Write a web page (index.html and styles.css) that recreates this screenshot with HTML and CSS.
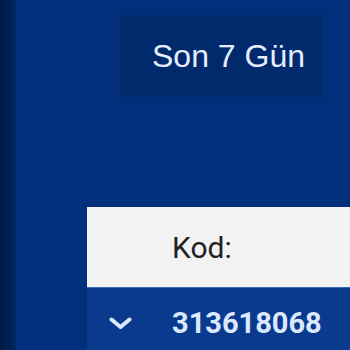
FILE: index.html
```html
<!DOCTYPE html>
<html lang="tr">
<head>
<meta charset="utf-8">
<link rel="stylesheet" href="styles.css">
</head>
<body>
<div class="page">
  <div class="strip"></div>
  <div class="main">
    <div class="filter">
      <div class="range">Son 7 Gün</div>
    </div>
    <div class="table">
      <div class="thead">
        <div class="cell-icon"></div>
        <div class="th">Kod:</div>
      </div>
      <div class="row">
        <div class="cell-icon">
          <svg class="chev" width="23" height="13" viewBox="0 0 23 13"><path d="M2.5 2.5 L11.5 10 L20.5 2.5" fill="none" stroke="#dce8ff" stroke-width="4" stroke-linecap="round" stroke-linejoin="round"/></svg>
        </div>
        <div class="td">313618068</div>
      </div>
    </div>
  </div>
</div>
</body>
</html>
```
FILE: styles.css
```css
html, body {
  margin: 0;
  padding: 0;
  width: 350px;
  height: 350px;
  overflow: hidden;
  background: #012f7b;
}
.page {
  display: flex;
  height: 350px;
}
.strip {
  width: 16px;
  flex: none;
  background: linear-gradient(to right, #001a44 0%, #001f52 60%, #022a6a 100%);
}
.main {
  flex: 1;
  display: flex;
  flex-direction: column;
}
.filter {
  padding: 15px 0 0 104px;
}
.range {
  width: 171px;
  height: 82px;
  padding-left: 32px;
  background: #012a6d;
  display: flex;
  align-items: center;
  font-family: "Liberation Sans", Arial, sans-serif;
  font-size: 32px;
  color: #e4eeff;
}
.table {
  margin: 110px 0 0 71px;
}
.thead {
  display: flex;
  align-items: center;
  height: 80px;
  background: #f2f2f3;
  border-bottom: 1px solid #3b69c0;
}
.cell-icon {
  width: 85px;
  flex: none;
  display: flex;
  align-items: center;
}
.th {
  font-family: Roboto, "Noto Sans", sans-serif;
  font-size: 30px;
  color: #222;
}
.row {
  display: flex;
  align-items: center;
  height: 70px;
  background: #0a3a8d;
}
.chev {
  margin-left: 22px;
  margin-top: 0;
}
.td {
  font-family: Roboto, "Noto Sans", sans-serif;
  font-weight: bold;
  font-size: 29px;
  color: #dce8ff;
}
```
